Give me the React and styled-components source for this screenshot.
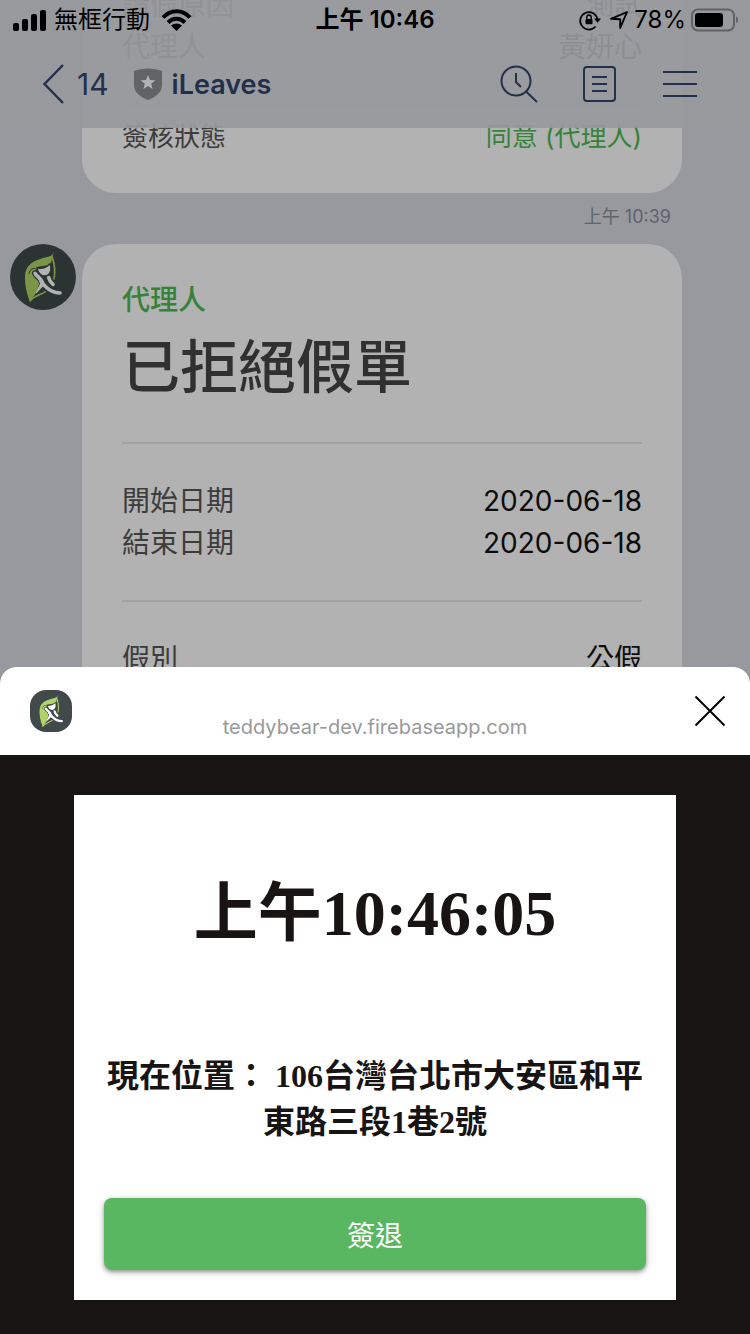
import React from "react";
import styled, { createGlobalStyle } from "styled-components";

const sans = `Inter, "Noto Sans CJK TC", sans-serif`;
const serif = `"Liberation Serif", "Noto Sans CJK TC", serif`;
const navy = "#242f4b";

const GlobalStyle = createGlobalStyle`
  * { box-sizing: border-box; }
  body { margin: 0; background: #98999f; font-family: ${sans}; }
  h1, h2, p, dl, dd, dt { margin: 0; }
  button { border: 0; padding: 0; background: none; font: inherit; color: inherit; cursor: pointer; }
  svg { display: block; flex: none; }
`;

const Screen = styled.div`
  display: flex;
  flex-direction: column;
  height: 100vh;
`;

const Chat = styled.main`
  position: relative;
  flex: 1 1 0;
  min-height: 0;
  overflow: hidden;
`;

const TopBar = styled.header`
  position: absolute;
  top: 0;
  left: 0;
  right: 0;
  background: rgba(152, 153, 157, 0.93);
`;

const StatusBar = styled.div`
  display: grid;
  grid-template-columns: 1fr auto 1fr;
  align-items: center;
  height: 40px;
  padding: 0 12px;
  font-size: 24px;
  line-height: 40px;
  color: #000;
`;

const StatusGroup = styled.div`
  display: flex;
  align-items: center;
  justify-content: ${(p) => (p.$end ? "flex-end" : "flex-start")};
  gap: ${(p) => (p.$end ? 4 : 8)}px;
`;

const Clock = styled.time`
  font-weight: 600;
`;

const NavBar = styled.nav`
  display: flex;
  align-items: center;
  justify-content: space-between;
  height: 88px;
  padding: 0 52px 0 42px;
  color: ${navy};
`;

const NavGroup = styled.div`
  display: flex;
  align-items: center;
  gap: ${(p) => p.$gap}px;
`;

const BackButton = styled.button`
  display: flex;
  align-items: center;
  gap: 12px;
  font-size: 30px;
`;

const ChatTitle = styled.h1`
  font-size: 27px;
  font-weight: 600;
`;

const Messages = styled.div`
  display: flex;
  flex-direction: column;
  margin-top: -16px;
`;

const Message = styled.article`
  display: grid;
  grid-template-columns: 66px minmax(0, 1fr);
  column-gap: 6px;
  align-items: start;
  padding: 0 68px 0 10px;
`;

const Bubble = styled.div`
  grid-column: 2;
  padding: ${(p) => (p.$continued ? "0 40px 35px" : "35px 40px")};
  background: #b2b2b2;
  border-radius: ${(p) => (p.$continued ? "0 0 34px 34px" : "34px")};
`;

const Time = styled.time`
  align-self: flex-end;
  padding: 0 79px 0 0;
  margin: 6px 0 9px;
  font-size: 18px;
  line-height: 36px;
  color: #606368;
`;

const Role = styled.p`
  font-size: 28px;
  font-weight: 500;
  line-height: 42px;
  color: #368239;
`;

const Headline = styled.h2`
  margin-bottom: 29px;
  font-size: 58px;
  font-weight: 500;
  line-height: 92px;
  color: #303030;
`;

const Fields = styled.dl`
  padding: ${(p) => (p.$first ? "0 0 36px" : p.$small ? "10px 0 0" : "36px 0")};
  border-top: ${(p) => (p.$first ? "0" : "2px solid #a2a2a2")};
  font-size: ${(p) => (p.$small ? 26 : 28)}px;
`;

const Field = styled.div`
  display: flex;
  justify-content: space-between;
  line-height: 42px;
`;

const Label = styled.dt`
  color: #3c3c3c;
`;

const Value = styled.dd`
  color: ${(p) => (p.$approved ? "#368239" : "#0c0c0c")};
`;

const Sheet = styled.section`
  flex: none;
  overflow: hidden;
  border-radius: 16px 16px 0 0;
  background: #181413;
`;

const SheetBar = styled.div`
  display: grid;
  grid-template-columns: 54px 1fr 54px;
  align-items: center;
  height: 88px;
  padding: 0 24px;
  background: #fff;
`;

const SheetLogo = styled.div`
  justify-self: center;
`;

const Address = styled.p`
  padding-top: 32px;
  text-align: center;
  font-size: 20px;
  line-height: 30px;
  color: #999;
`;

const CloseButton = styled.button`
  justify-self: end;
  color: #000;
`;

const SheetBody = styled.div`
  padding: 40px 74px 34px;
`;

const ClockCard = styled.div`
  display: flex;
  flex-direction: column;
  padding: 73px 30px 30px;
  background: #fff;
  color: #181413;
  text-align: center;
  font-family: ${serif};
  font-weight: 700;
`;

const Now = styled.h2`
  font-size: 64px;
  line-height: 92px;
`;

const Place = styled.p`
  margin: 93px 0 53px;
  font-size: 32px;
  line-height: 46px;
`;

const SignOut = styled.button`
  height: 72px;
  border-radius: 8px;
  background: #59b661;
  box-shadow: 0 2px 4px rgba(0, 0, 0, 0.36), 0 2px 10px rgba(0, 0, 0, 0.12);
  font-family: ${sans};
  font-size: 28px;
  font-weight: 400;
  color: #fff;
`;

const Logo = ({ size, rounded, bg, leaf, figure }) => (
  <svg width={size} height={size} viewBox="0 0 198 198" aria-hidden="true">
    <rect width="198" height="198" rx={rounded ? 76 : 99} fill={bg} />
    <path
      d="M131 24C128 33 122 37 112 39C84 45 52 56 46 86C42 112 48 145 60 174C66 160 74 156 78 146L88 118L72 86L84 68L122 62C125 50 127 40 131 24Z"
      fill={leaf}
    />
    <path d="M126 38C135 62 136 84 132 106M60 172C68 158 90 154 107 142" fill="none" stroke={leaf} strokeWidth="5" />
    <path d="M57 90C60 74 70 70 82 76" fill="none" stroke={bg} strokeWidth="3" />
    <g fill="none" stroke={bg} strokeWidth="18" strokeLinecap="round" strokeLinejoin="round">
      <path d="M75 88C80 99 92 99 95 113L97 119C108 126 116 146 150 147" />
      <path d="M116 101C118 109 122 115 129 121" />
    </g>
    <path
      d="M84 74C96 77 110 72 119 63C124 80 117 94 104 94C93 93 86 84 84 74Z"
      fill={figure}
      stroke={bg}
      strokeWidth="8"
      paintOrder="stroke"
    />
    <g fill="none" stroke={figure} strokeWidth="11" strokeLinecap="round" strokeLinejoin="round">
      <path d="M75 88C80 99 92 99 95 113L97 119C108 126 116 146 150 147" />
      <path d="M116 101C118 109 122 115 129 121" />
    </g>
    <path d="M82 98L98 106L112 133L98 128L78 149C77 140 86 132 90 118Z" fill={figure} />
  </svg>
);

const SignalIcon = () => (
  <svg width="34" height="22" viewBox="0 0 34 22" aria-hidden="true">
    <rect x="1" y="14" width="6" height="8" rx="2" />
    <rect x="10" y="10" width="6" height="12" rx="2" />
    <rect x="19" y="5" width="6" height="17" rx="2" />
    <rect x="28" y="1" width="6" height="21" rx="2" />
  </svg>
);

const WifiIcon = () => (
  <svg width="36" height="24" viewBox="0 0 36 24" aria-hidden="true">
    <path d="M5 9.500C12.500 1 24.500 1 32 9.500M10 14.500C15 9.500 22 9.500 27 14.500" fill="none" stroke="#000" strokeWidth="4" />
    <path d="M13 17.500C16.500 14.800 20.500 14.800 24 17.500L18.500 23Z" />
  </svg>
);

const LockIcon = () => (
  <svg width="24" height="22" viewBox="0 0 24 22" aria-hidden="true">
    <path d="M17.500 17.500A8.700 8.700 0 1 1 19.400 10" fill="none" stroke="#000" strokeWidth="1.7" />
    <path d="M16 9.500H23L19.600 13.800Z" />
    <rect x="7.500" y="10" width="7" height="5.200" rx="1" />
    <path d="M8.800 10V8.200a2.200 2.200 0 0 1 4.400 0V10" fill="none" stroke="#000" strokeWidth="1.4" />
  </svg>
);

const LocationIcon = () => (
  <svg width="24" height="22" viewBox="0 0 24 22" aria-hidden="true">
    <path d="M5 9.800L21 3L14.200 19V10.200Z" fill="none" stroke="#000" strokeWidth="1.9" strokeLinejoin="round" />
  </svg>
);

const BatteryIcon = () => (
  <svg width="48" height="24" viewBox="0 0 48 24" aria-hidden="true">
    <rect x="2" y="1.500" width="42" height="21" rx="6" fill="none" stroke="#626366" strokeWidth="2" />
    <rect x="5" y="5" width="28" height="14" rx="3" />
    <path d="M46 8.500C49 9.500 49 14 46 15Z" fill="#626366" />
  </svg>
);

const BackIcon = () => (
  <svg width="23" height="40" viewBox="0 0 23 40" fill="none" stroke="currentColor" strokeWidth="2.4" aria-hidden="true">
    <path d="M21 1L2.500 20L21 39" />
  </svg>
);

const ShieldIcon = () => (
  <svg width="28" height="32" viewBox="0 0 28 32" aria-hidden="true">
    <path d="M0 3C8 -.5 20 -.5 28 3V17C28 24 22 29 14 32C6 29 0 24 0 17Z" fill="#626364" />
    <path d="M14 7L16 12L21.300 12.300L17.200 15.700L18.600 20.900L14 18L9.400 20.900L10.800 15.700L6.700 12.300L12 12Z" fill="#b2b2b2" />
  </svg>
);

const HistoryIcon = () => (
  <svg width="38" height="38" viewBox="0 0 38 38" fill="none" stroke="currentColor" strokeWidth="2" aria-hidden="true">
    <circle cx="16" cy="16" r="14.500" />
    <path d="M16 8V17L21 22M26 26.500L37 37" />
  </svg>
);

const NoteIcon = () => (
  <svg width="34" height="38" viewBox="0 0 34 38" fill="none" stroke="currentColor" strokeWidth="2" aria-hidden="true">
    <rect x="1" y="2" width="31" height="34" rx="3" />
    <path d="M9 12H24M9 19H24M9 26H24" />
  </svg>
);

const MenuIcon = () => (
  <svg width="36" height="28" viewBox="0 0 36 28" fill="none" stroke="currentColor" strokeWidth="2" aria-hidden="true">
    <path d="M1 2H35M1 14H35M1 26H35" />
  </svg>
);

const CloseIcon = () => (
  <svg width="32" height="32" viewBox="0 0 32 32" fill="none" stroke="currentColor" strokeWidth="2" aria-hidden="true">
    <path d="M1.500 1.500L30.500 30.500M30.500 1.500L1.500 30.500" />
  </svg>
);

const Row = ({ label, value, approved }) => (
  <Field>
    <Label>{label}</Label>
    <Value $approved={approved}>{value}</Value>
  </Field>
);

export default function App() {
  return (
    <Screen>
      <GlobalStyle />
      <Chat>
        <Messages>
          <Message>
            <Bubble $continued>
              <Fields $first>
                <Row label="請假原因" value="測試" />
                <Row label="代理人" value="黃妍心" />
              </Fields>
              <Fields $small>
                <Row label="簽核狀態" value="同意 (代理人)" approved />
              </Fields>
            </Bubble>
          </Message>
          <Time>上午 10:39</Time>
          <Message>
            <Logo size={66} bg="#2c3333" leaf="#7b9547" figure="#b2b2b2" />
            <Bubble>
              <Role>代理人</Role>
              <Headline>已拒絕假單</Headline>
              <Fields>
                <Row label="開始日期" value="2020-06-18" />
                <Row label="結束日期" value="2020-06-18" />
              </Fields>
              <Fields>
                <Row label="假別" value="公假" />
              </Fields>
            </Bubble>
          </Message>
        </Messages>

        <TopBar>
          <StatusBar>
            <StatusGroup>
              <SignalIcon />
              <span>無框行動</span>
              <WifiIcon />
            </StatusGroup>
            <Clock>上午 10:46</Clock>
            <StatusGroup $end>
              <LockIcon />
              <LocationIcon />
              <span>78%</span>
              <BatteryIcon />
            </StatusGroup>
          </StatusBar>
          <NavBar>
            <NavGroup $gap={25}>
              <BackButton aria-label="返回, 14">
                <BackIcon />
                14
              </BackButton>
              <NavGroup $gap={10}>
                <ShieldIcon />
                <ChatTitle>iLeaves</ChatTitle>
              </NavGroup>
            </NavGroup>
            <NavGroup $gap={45}>
              <button aria-label="搜尋">
                <HistoryIcon />
              </button>
              <button aria-label="記事本">
                <NoteIcon />
              </button>
              <button aria-label="選單">
                <MenuIcon />
              </button>
            </NavGroup>
          </NavBar>
        </TopBar>
      </Chat>

      <Sheet>
        <SheetBar>
          <SheetLogo>
            <Logo size={42} rounded bg="#41494b" leaf="#b0d466" figure="#fff" />
          </SheetLogo>
          <Address>teddybear-dev.firebaseapp.com</Address>
          <CloseButton aria-label="關閉">
            <CloseIcon />
          </CloseButton>
        </SheetBar>
        <SheetBody>
          <ClockCard>
            <Now>上午10:46:05</Now>
            <Place>現在位置： 106台灣台北市大安區和平東路三段1巷2號</Place>
            <SignOut>簽退</SignOut>
          </ClockCard>
        </SheetBody>
      </Sheet>
    </Screen>
  );
}
